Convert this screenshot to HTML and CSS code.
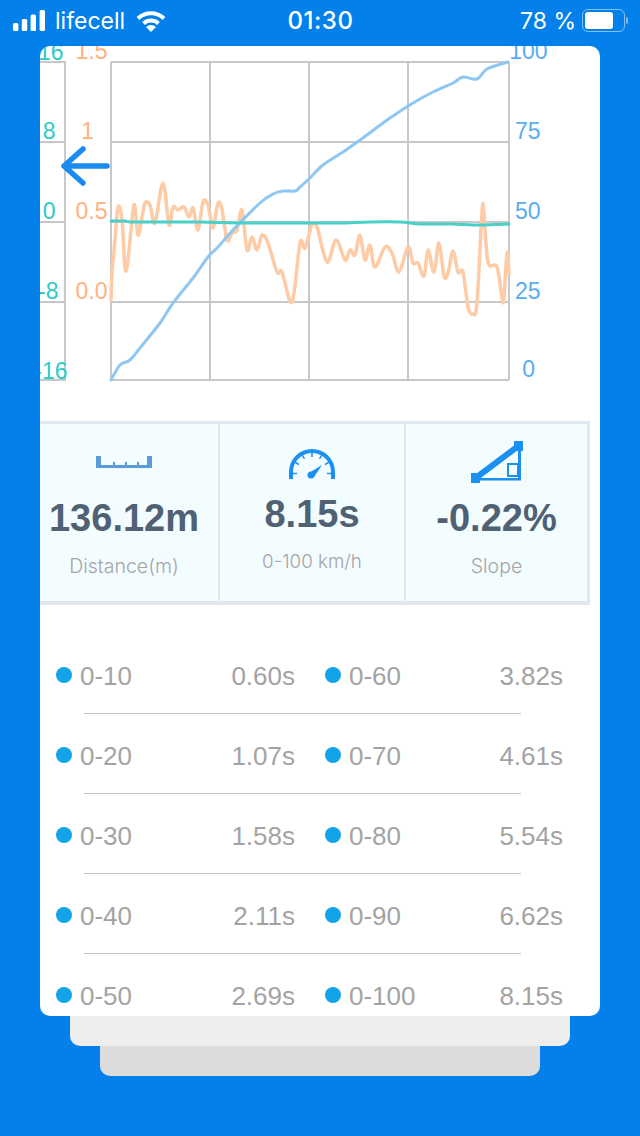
FILE: index.html
```html
<!DOCTYPE html>
<html lang="en">
<head>
  <meta charset="UTF-8" />
  <meta name="viewport" content="width=device-width, initial-scale=1" />
  <title>Acceleration result</title>
  <link rel="stylesheet" href="styles.css">
</head>
<body>
  <header class="status-bar">
    <div class="status-left">
      <svg class="signal" width="32" height="21" viewBox="0 0 32 21">
        <rect x="0" y="13" width="5.4" height="8" rx="1.5" />
        <rect x="8.8" y="9" width="5.4" height="12" rx="1.5" />
        <rect x="17.6" y="4.5" width="5.4" height="16.5" rx="1.5" />
        <rect x="26.6" y="0" width="5.4" height="21" rx="1.5" />
      </svg>
      <span class="carrier">lifecell</span>
      <svg class="wifi" width="30" height="22" viewBox="0 0 30 22">
        <path d="M2 8.5A19 19 0 0 1 28 8.5" />
        <path d="M7.5 13.5A11 11 0 0 1 22.5 13.5" />
        <path class="wifi-dot" d="M15 22L10 17A7 7 0 0 1 20 17Z" />
      </svg>
    </div>
    <div class="status-time">01:30</div>
    <div class="status-right">
      <span>78 %</span>
      <div class="battery"><div class="battery-level"></div></div>
      <div class="battery-nub"></div>
    </div>
  </header>

  <main class="stack">
    <section class="card">
      <svg class="chart" id="chart" viewBox="40 46 560 375" width="560" height="375">
        <g class="grid">
          <path d="M111 62H509M111 142H509M111 222H509M111 302H509M111 380H509" />
          <path d="M111 62V380M210 62V380M309 62V380M408 62V380M509 62V380" />
          <path d="M40 62H65V380H40M40 142H65M40 222H65M40 302H65" />
        </g>
        <g class="axis-teal">
          <text x="63.5" y="60">16</text>
          <text x="55.5" y="139">8</text>
          <text x="55.5" y="219">0</text>
          <text x="58.5" y="299">-8</text>
          <text x="67.5" y="379">-16</text>
        </g>
        <g class="axis-orange">
          <text x="107.5" y="59">1.5</text>
          <text x="94" y="139">1</text>
          <text x="107.5" y="219">0.5</text>
          <text x="107.5" y="299">0.0</text>
        </g>
        <g class="axis-blue">
          <text x="547.5" y="59">100</text>
          <text x="540.5" y="139">75</text>
          <text x="540.5" y="219">50</text>
          <text x="540.5" y="299">25</text>
          <text x="535" y="377">0</text>
        </g>
        <path class="line line-orange" id="lineOrange" />
        <path class="line line-blue" id="lineBlue" />
        <path class="line line-teal" id="lineTeal" />
        <path class="back-arrow" d="M107 166H64M83 149L64 166L83 183" />
      </svg>

      <div class="stats">
        <div class="stat">
          <div class="stat-icon">
            <svg class="icon-ruler" width="56" height="12" viewBox="0 0 56 12">
              <path d="M0 0H5V9H17V6H19V9H29V6H31V9H41V6H43V9H51V0H56V12H0Z" />
            </svg>
          </div>
          <div class="stat-value">136.12m</div>
          <div class="stat-label">Distance(m)</div>
        </div>
        <div class="stat stat-speed">
          <div class="stat-icon">
            <svg class="icon-gauge" width="46" height="30" viewBox="0 0 46 30">
              <path class="gauge-arc" d="M2 30V23A21 21 0 0 1 44 23V30" />
              <path class="gauge-ticks" d="M23 4V8M13.5 6.5L15.5 10M32.5 6.5L30.5 10M6.5 13.5L10 15.5M39.5 13.5L36 15.5M4 24.5H8M42 24.5H38" />
              <path class="gauge-needle" d="M20 24L33 16L25 28Z" />
              <circle class="gauge-needle" cx="22" cy="26" r="3.5" />
            </svg>
          </div>
          <div class="stat-value">8.15s</div>
          <div class="stat-label">0-100 km/h</div>
        </div>
        <div class="stat">
          <div class="stat-icon">
            <svg class="icon-slope" width="52" height="42" viewBox="0 0 52 42">
              <rect class="slope-fill" x="0" y="32" width="9" height="10" />
              <rect class="slope-fill" x="43" y="0" width="9" height="10" />
              <path class="slope-hyp" d="M6 36L46 6" />
              <rect class="slope-fill" x="47" y="8" width="3" height="31" />
              <rect class="slope-fill" x="8" y="37" width="42" height="2.5" />
              <rect class="slope-box" x="37" y="23" width="10" height="12" />
            </svg>
          </div>
          <div class="stat-value">-0.22%</div>
          <div class="stat-label">Slope</div>
        </div>
      </div>

      <div class="splits">
        <div class="split-row">
          <div class="split"><i class="dot"></i><span>0-10</span><span class="split-time">0.60s</span></div>
          <div class="split"><i class="dot"></i><span>0-60</span><span class="split-time">3.82s</span></div>
        </div>
        <div class="split-row">
          <div class="split"><i class="dot"></i><span>0-20</span><span class="split-time">1.07s</span></div>
          <div class="split"><i class="dot"></i><span>0-70</span><span class="split-time">4.61s</span></div>
        </div>
        <div class="split-row">
          <div class="split"><i class="dot"></i><span>0-30</span><span class="split-time">1.58s</span></div>
          <div class="split"><i class="dot"></i><span>0-80</span><span class="split-time">5.54s</span></div>
        </div>
        <div class="split-row">
          <div class="split"><i class="dot"></i><span>0-40</span><span class="split-time">2.11s</span></div>
          <div class="split"><i class="dot"></i><span>0-90</span><span class="split-time">6.62s</span></div>
        </div>
        <div class="split-row">
          <div class="split"><i class="dot"></i><span>0-50</span><span class="split-time">2.69s</span></div>
          <div class="split"><i class="dot"></i><span>0-100</span><span class="split-time">8.15s</span></div>
        </div>
      </div>
    </section>
    <div class="card-back card-back-1"></div>
    <div class="card-back card-back-2"></div>
  </main>

  <script src="chart.js"></script>
</body>
</html>
```

FILE: styles.css
```css
* {
  box-sizing: border-box;
}

body {
  margin: 0;
  width: 640px;
  height: 1136px;
  overflow: hidden;
  background: #0380ea;
  font-family: 'Liberation Sans', sans-serif;
}

.status-bar {
  height: 46px;
  padding: 0 12px 5px 13px;
  display: flex;
  align-items: center;
  justify-content: space-between;
  color: #fff;
  font-family: 'Inter', sans-serif;
  font-size: 23px;
}

.status-left {
  width: 220px;
  display: flex;
  align-items: center;
}

.signal {
  fill: #fff;
  margin-right: 10px;
}

.carrier {
  margin-right: 11px;
}

.wifi path {
  fill: none;
  stroke: #fff;
  stroke-width: 4;
}

.wifi .wifi-dot {
  fill: #fff;
  stroke: none;
}

.status-time {
  font-size: 24px;
  font-weight: 500;
  letter-spacing: 0.5px;
}

.status-right {
  width: 220px;
  display: flex;
  align-items: center;
  justify-content: flex-end;
}

.battery {
  width: 43px;
  height: 23px;
  margin-left: 6px;
  padding: 2px;
  border: 1.5px solid rgba(255, 255, 255, 0.5);
  border-radius: 6px;
}

.battery-level {
  width: 28px;
  height: 100%;
  background: #fff;
  border-radius: 3px;
}

.battery-nub {
  width: 2px;
  height: 7px;
  margin-left: 1px;
  background: rgba(255, 255, 255, 0.5);
  border-radius: 0 2px 2px 0;
}

.card {
  height: 970px;
  margin: 0 40px;
  background: #fff;
  border-radius: 10px;
  overflow: hidden;
}

.card-back {
  height: 30px;
  border-radius: 0 0 10px 10px;
}

.card-back-1 {
  margin: 0 70px;
  background: #eeeeee;
}

.card-back-2 {
  margin: 0 100px;
  background: #dcdcdc;
}

.chart {
  display: block;
}

.chart text {
  font-size: 23px;
  text-anchor: end;
}

.grid path {
  fill: none;
  stroke: #c8c8c8;
  stroke-width: 2;
}

.axis-teal {
  fill: #2ccbc6;
}

.axis-orange {
  fill: #ffb27d;
}

.axis-blue {
  fill: #58adf1;
}

.line {
  fill: none;
  stroke-linejoin: round;
  stroke-linecap: round;
  filter: blur(0.4px);
}

.line-blue {
  stroke: #8ec8f2;
  stroke-width: 3;
}

.line-orange {
  stroke: #fdcba6;
  stroke-width: 3.5;
}

.line-teal {
  stroke: #48d0c9;
  stroke-width: 3;
}

.back-arrow {
  fill: none;
  stroke: #1a8cf0;
  stroke-width: 5.5;
  stroke-linecap: round;
  stroke-linejoin: round;
}

/* starts left of the card, the card clips its left border */
.stats {
  height: 184px;
  margin: 0 10px 0 -10px;
  display: grid;
  grid-template-columns: 185px 186px 1fr;
  background: #f3fcff;
  border: solid #dfe8ec;
  border-width: 3px 3px 4px 3px;
}

.stat {
  padding-top: 14px;
  display: flex;
  flex-direction: column;
  align-items: center;
  color: #a5a5a5;
}

.stat:first-child {
  padding-right: 3px;
}

.stat + .stat {
  border-left: 2px solid #dfe8ec;
}

.stat-icon {
  height: 50px;
}

.stat-speed .stat-icon {
  height: 46px;
}

.stat-icon svg {
  display: block;
}

.icon-ruler {
  margin-top: 18px;
  fill: #5b9bd8;
}

.icon-gauge {
  margin-top: 11px;
}

.icon-slope {
  margin-top: 3px;
}

.gauge-arc {
  fill: none;
  stroke: #1a90f0;
  stroke-width: 4;
}

.gauge-ticks {
  fill: none;
  stroke: #1a90f0;
  stroke-width: 1.5;
}

.gauge-needle {
  fill: #1a90f0;
}

.slope-fill {
  fill: #1a90f0;
}

.slope-hyp {
  stroke: #1a90f0;
  stroke-width: 6;
}

.slope-box {
  fill: none;
  stroke: #1a90f0;
  stroke-width: 2;
}

.stat-value {
  height: 60px;
  line-height: 60px;
  font-size: 38px;
  font-weight: bold;
  color: #4f6173;
}

.stat-label {
  margin-top: 6px;
  line-height: 24px;
  font-family: 'Inter', sans-serif;
  font-size: 19.5px;
  font-weight: 300;
}

.stat-speed .stat-label {
  font-size: 18.8px;
}

.splits {
  width: 507px;
  margin: 56px 0 0 16px;
}

.split-row {
  height: 80px;
  display: grid;
  grid-template-columns: 239px 238px;
  column-gap: 30px;
  align-content: start;
  position: relative;
}

.split-row:not(:last-child)::after {
  content: "";
  position: absolute;
  left: 28px;
  width: 437px;
  top: 52px;
  height: 1px;
  background: #c4c4c4;
}

.split {
  height: 30px;
  display: flex;
  align-items: center;
  font-size: 26px;
  color: #a3a3a3;
}

.dot {
  width: 16px;
  height: 16px;
  margin: -2px 8px 0 0;
  border-radius: 50%;
  background: #12a3e8;
}

.split-time {
  margin-left: auto;
}
```

FILE: chart.js
```js
const blue = [[111,380],[120,365],[130,360],[140,348],[160,323],[173,303],[193,278],[208,257],[218,247],[233,230],[260,203],[273,194],[283,191],[295,191],[300,187],[310,178],[323,165],[343,152],[360,140],[390,118],[413,103],[433,92],[453,83],[463,77],[477,79],[487,69],[508,62]];

const orange = [[111,300],[112,273],[115,240],[118,207],[122,220],[125,268],[128,260],[134,205],[138,235],[142,217],[145,203],[150,205],[155,223],[163,183],[169,225],[173,207],[178,210],[184,207],[189,217],[193,208],[198,230],[203,202],[208,205],[213,228],[218,203],[222,210],[227,240],[232,233],[237,230],[242,210],[247,250],[252,237],[257,250],[262,235],[268,243],[277,272],[282,272],[292,302],[300,243],[305,248],[312,225],[317,227],[327,262],[336,240],[345,260],[350,250],[355,255],[360,235],[365,260],[370,245],[375,267],[385,247],[392,253],[399,272],[408,247],[413,263],[418,263],[424,276],[428,250],[434,272],[439,243],[444,276],[448,273],[453,251],[458,272],[463,272],[468,307],[473,314],[477,303],[482,212],[484,213],[488,262],[497,267],[502,298],[504,298],[507,253],[509,273]];

const teal = [[111,221],[125,221],[135,222],[200,222],[240,223],[330,223],[345,223],[370,222],[400,222],[420,224],[450,224],[480,225],[509,224]];

// catmull-rom through the points, written out as cubic beziers
function smoothPath(pts) {
  let d = `M${pts[0][0]} ${pts[0][1]}`;
  for (let i = 0; i < pts.length - 1; i++) {
    const p0 = pts[i - 1] || pts[i];
    const p1 = pts[i];
    const p2 = pts[i + 1];
    const p3 = pts[i + 2] || p2;
    const c1x = p1[0] + (p2[0] - p0[0]) / 6;
    const c1y = p1[1] + (p2[1] - p0[1]) / 6;
    const c2x = p2[0] - (p3[0] - p1[0]) / 6;
    const c2y = p2[1] - (p3[1] - p1[1]) / 6;
    d += `C${c1x} ${c1y} ${c2x} ${c2y} ${p2[0]} ${p2[1]}`;
  }
  return d;
}

document.getElementById('lineBlue').setAttribute('d', smoothPath(blue));
document.getElementById('lineOrange').setAttribute('d', smoothPath(orange));
document.getElementById('lineTeal').setAttribute('d', smoothPath(teal));
```
